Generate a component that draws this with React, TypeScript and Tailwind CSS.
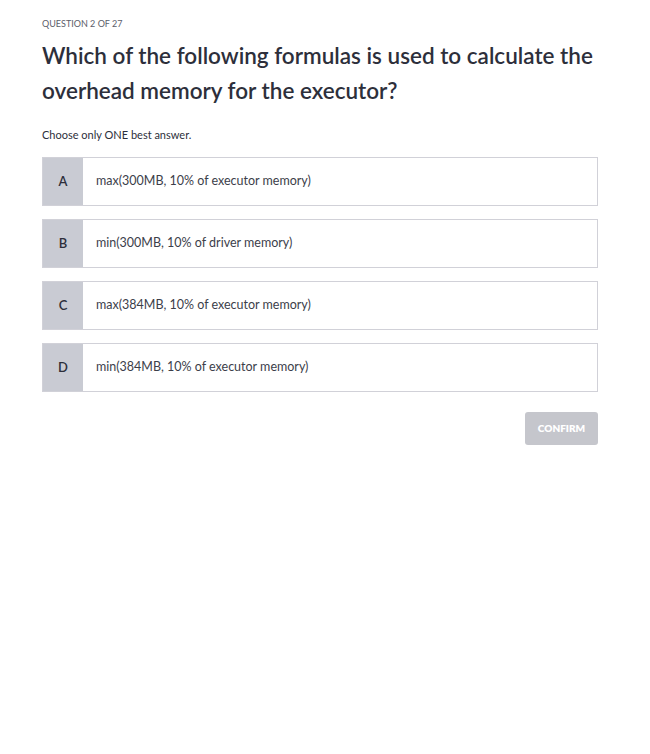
const options = [
  { key: 'A', text: 'max(300MB, 10% of executor memory)' },
  { key: 'B', text: 'min(300MB, 10% of driver memory)' },
  { key: 'C', text: 'max(384MB, 10% of executor memory)' },
  { key: 'D', text: 'min(384MB, 10% of executor memory)' },
];

export default function App() {
  return (
    <div
      className="min-h-[754px] w-[650px] bg-white px-[42px] pt-[18px] text-[#2d2f3b]"
      style={{ fontFamily: 'Lato, "Open Sans", sans-serif' }}
    >
      <p className="text-[9px] uppercase leading-[12px] text-[#5c5e6a]">Question 2 of 27</p>
      <h1 className="mt-[8px] w-[575px] text-[22.5px] font-semibold leading-[35px] text-[#2d2f3b]">
        Which of the following formulas is used to calculate the overhead memory for the executor?
      </h1>
      <p className="mt-[20px] text-[11px] leading-[14px] text-[#2d2f3b]">Choose only ONE best answer.</p>
      <ul className="mt-[15px] flex w-[556px] flex-col gap-[13px]">
        {options.map((o) => (
          <li key={o.key} className="flex h-[49px] border border-[#d1d1d8] bg-white">
            <div className="flex w-[40px] items-center justify-center bg-[#c9cbd3] text-[13px] font-semibold">
              {o.key}
            </div>
            <div className="flex items-center pl-[13px] text-[12.5px] text-[#3c3e4a]">{o.text}</div>
          </li>
        ))}
      </ul>
      <div className="mt-[20px] flex w-[556px] justify-end">
        <button className="h-[33px] w-[73px] rounded-[3px] bg-[#c5c6cc] text-[10px] font-extrabold text-white">
          CONFIRM
        </button>
      </div>
    </div>
  );
}
